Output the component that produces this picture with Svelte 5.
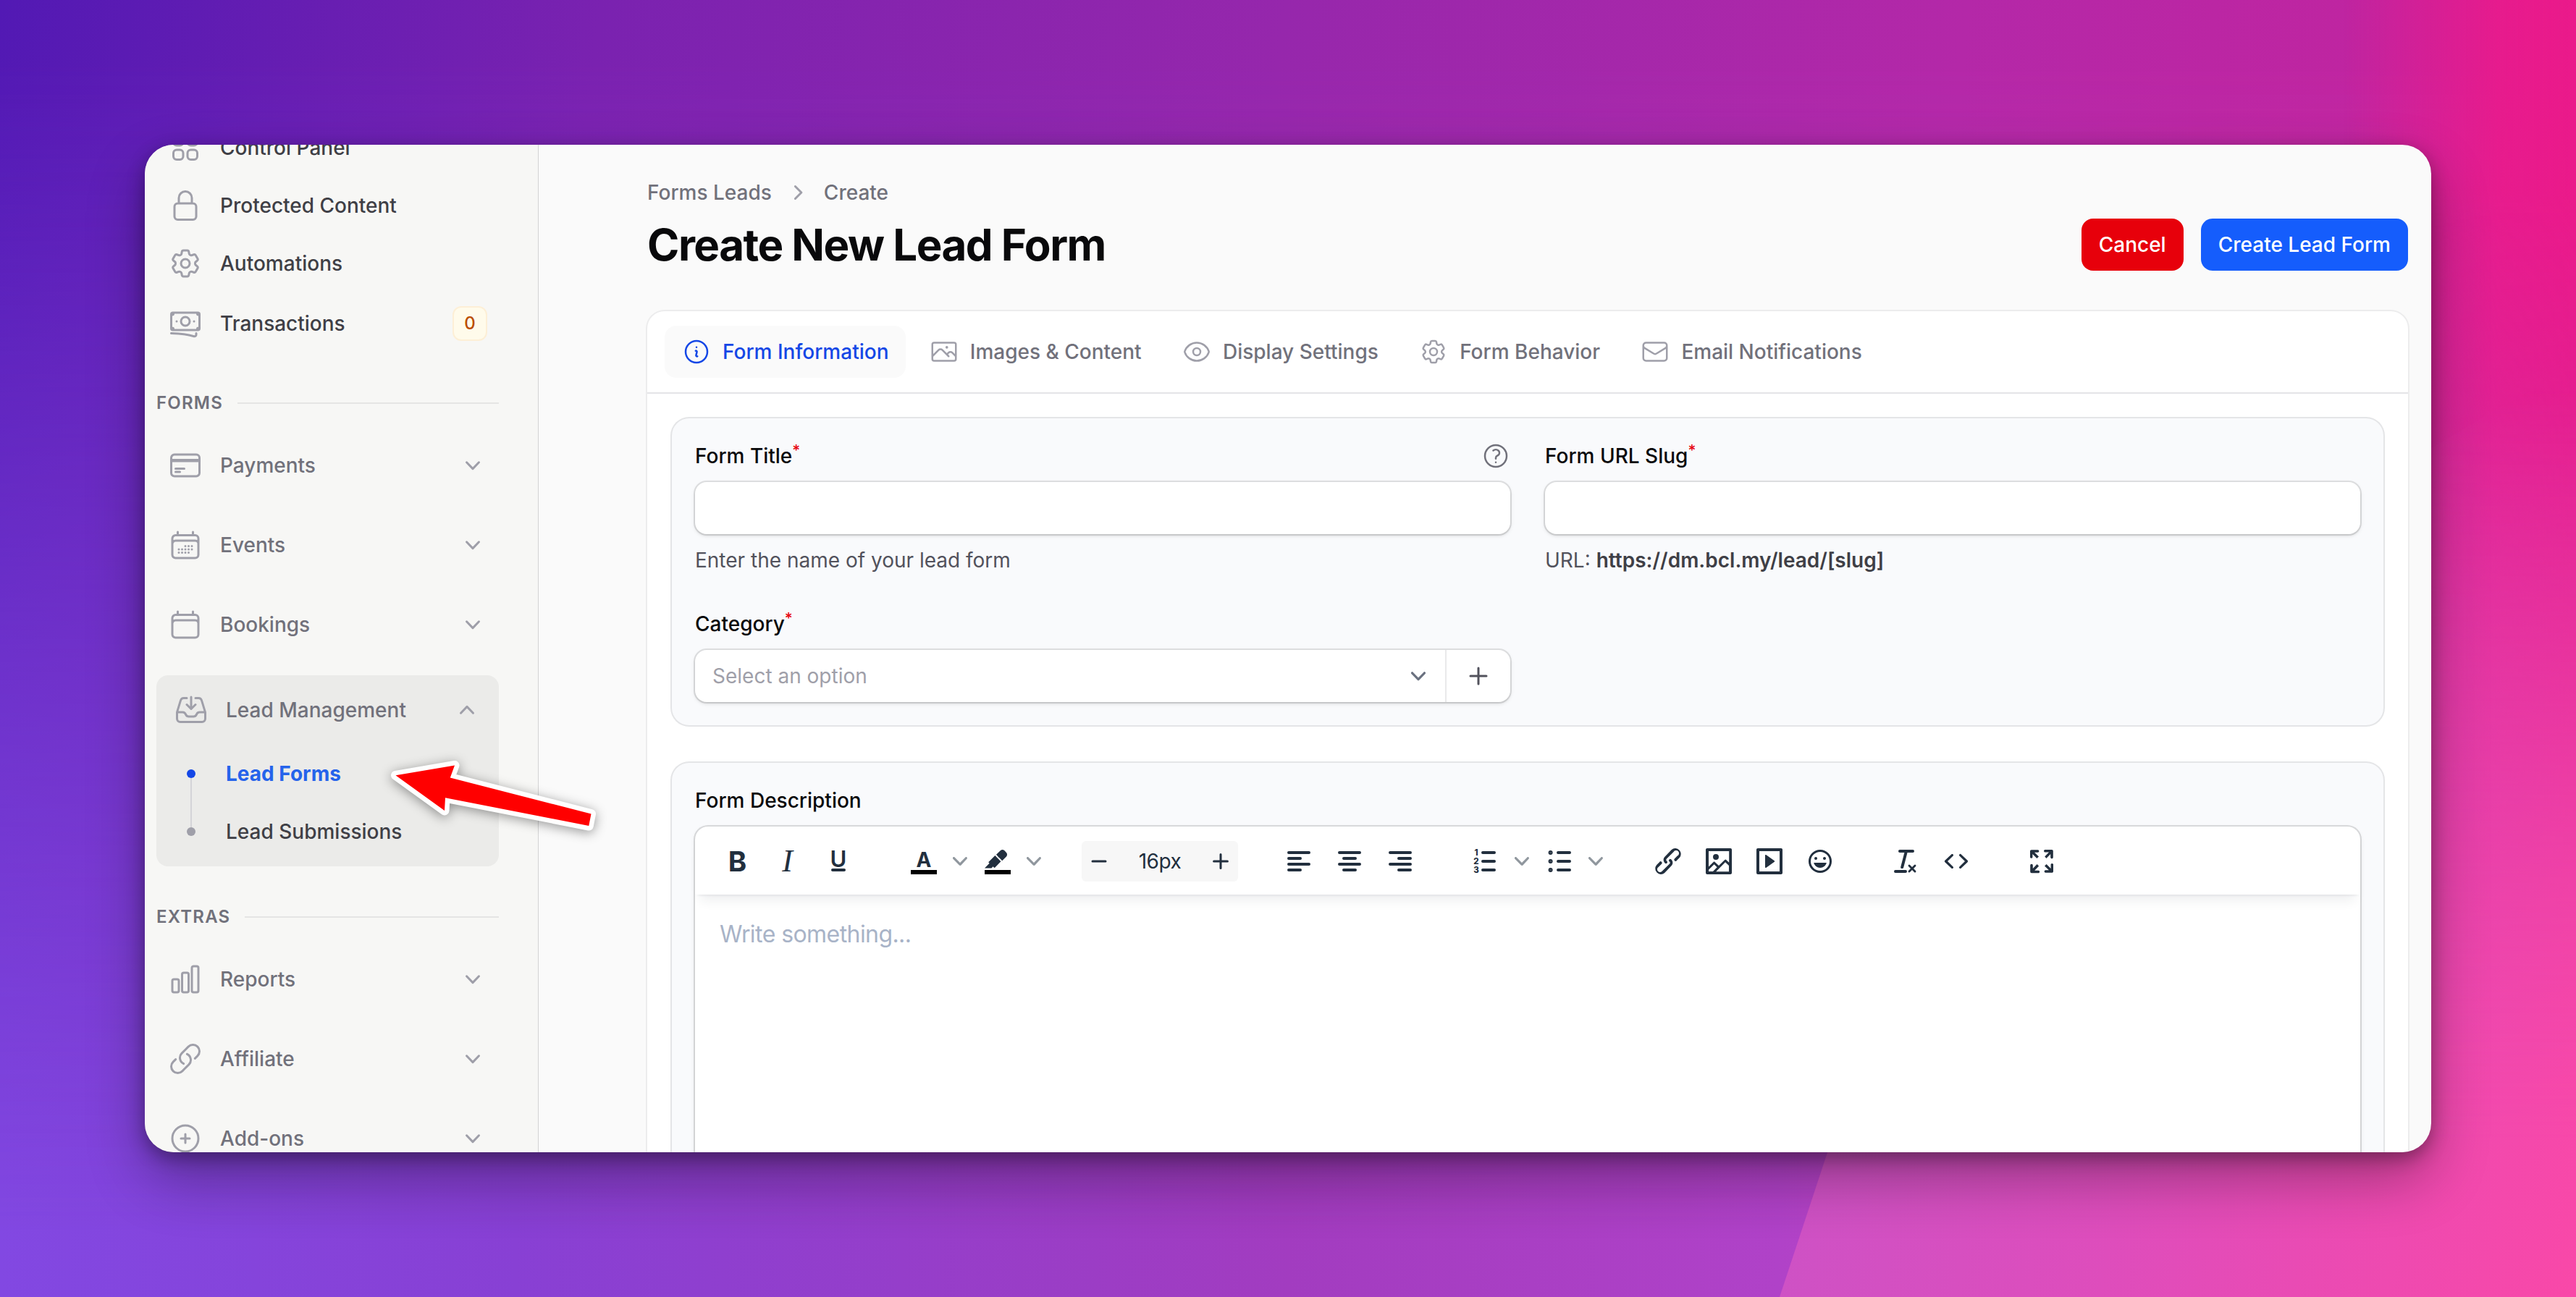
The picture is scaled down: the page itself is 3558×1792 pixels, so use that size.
<script lang="ts">
    const outline: Record<string, string> = {
        squares: 'M3.75 6A2.25 2.25 0 0 1 6 3.75h2.25A2.25 2.25 0 0 1 10.5 6v2.25a2.25 2.25 0 0 1-2.25 2.25H6a2.25 2.25 0 0 1-2.25-2.25V6ZM3.75 15.75A2.25 2.25 0 0 1 6 13.5h2.25a2.25 2.25 0 0 1 2.25 2.25V18a2.25 2.25 0 0 1-2.25 2.25H6A2.25 2.25 0 0 1 3.75 18v-2.25ZM13.5 6a2.25 2.25 0 0 1 2.25-2.25H18A2.25 2.25 0 0 1 20.25 6v2.25A2.25 2.25 0 0 1 18 10.5h-2.25a2.25 2.25 0 0 1-2.25-2.25V6ZM13.5 15.75a2.25 2.25 0 0 1 2.25-2.25H18a2.25 2.25 0 0 1 2.25 2.25V18A2.25 2.25 0 0 1 18 20.25h-2.25A2.25 2.25 0 0 1 13.5 18v-2.25Z',
        lock: 'M16.5 10.5V6.75a4.5 4.5 0 1 0-9 0v3.75m-.75 11.25h10.5a2.25 2.25 0 0 0 2.25-2.25v-6.75a2.25 2.25 0 0 0-2.25-2.25H6.75a2.25 2.25 0 0 0-2.25 2.25v6.75a2.25 2.25 0 0 0 2.25 2.25Z',
        cog: 'M9.594 3.94c.09-.542.56-.94 1.11-.94h2.593c.55 0 1.02.398 1.11.94l.213 1.281c.063.374.313.686.645.87.074.04.147.083.22.127.325.196.72.257 1.075.124l1.217-.456a1.125 1.125 0 0 1 1.37.49l1.296 2.247a1.125 1.125 0 0 1-.26 1.431l-1.003.827c-.293.241-.438.613-.43.992a7.723 7.723 0 0 1 0 .255c-.008.378.137.75.43.991l1.004.827c.424.35.534.955.26 1.43l-1.298 2.247a1.125 1.125 0 0 1-1.369.491l-1.217-.456c-.355-.133-.75-.072-1.076.124a6.47 6.47 0 0 1-.22.128c-.331.183-.581.495-.644.869l-.213 1.281c-.09.543-.56.94-1.11.94h-2.594c-.55 0-1.019-.398-1.11-.94l-.213-1.281c-.062-.374-.312-.686-.644-.87a6.52 6.52 0 0 1-.22-.127c-.325-.196-.72-.257-1.076-.124l-1.217.456a1.125 1.125 0 0 1-1.369-.49l-1.297-2.247a1.125 1.125 0 0 1 .26-1.431l1.004-.827c.292-.24.437-.613.43-.991a6.932 6.932 0 0 1 0-.255c.007-.38-.138-.751-.43-.992l-1.004-.827a1.125 1.125 0 0 1-.26-1.43l1.297-2.247a1.125 1.125 0 0 1 1.37-.491l1.216.456c.356.133.751.072 1.076-.124.072-.044.146-.086.22-.128.332-.183.582-.495.644-.869l.214-1.28ZM15 12a3 3 0 1 1-6 0 3 3 0 0 1 6 0Z',
        banknotes: 'M2.25 18.75a60.07 60.07 0 0 1 15.797 2.101c.727.198 1.453-.342 1.453-1.096V18.75M3.75 4.5v.75A.75.75 0 0 1 3 6h-.75m0 0v-.375c0-.621.504-1.125 1.125-1.125H20.25M2.25 6v9m18-10.5v.75c0 .414.336.75.75.75h.75m-1.5-1.5h.375c.621 0 1.125.504 1.125 1.125v9.75c0 .621-.504 1.125-1.125 1.125h-.375m1.5-1.5H21a.75.75 0 0 0-.75.75v.75m0 0H3.75m0 0h-.375a1.125 1.125 0 0 1-1.125-1.125V15m1.5 1.5v-.75A.75.75 0 0 0 3 15h-.75M15 10.5a3 3 0 1 1-6 0 3 3 0 0 1 6 0Zm3 0h.008v.008H18V10.5Zm-12 0h.008v.008H6V10.5Z',
        card: 'M2.25 8.25h19.5M2.25 9h19.5m-16.5 5.25h6m-6 2.25h3m-3.75 3h15a2.25 2.25 0 0 0 2.25-2.25V6.75A2.25 2.25 0 0 0 19.5 4.5h-15a2.25 2.25 0 0 0-2.25 2.25v10.5A2.25 2.25 0 0 0 4.5 19.5Z',
        calendarDays: 'M6.75 3v2.25M17.25 3v2.25M3 18.75V7.5a2.25 2.25 0 0 1 2.25-2.25h13.5A2.25 2.25 0 0 1 21 7.5v11.25m-18 0A2.25 2.25 0 0 0 5.25 21h13.5A2.25 2.25 0 0 0 21 18.75m-18 0v-7.5A2.25 2.25 0 0 1 5.25 9h13.5A2.25 2.25 0 0 1 21 11.25v7.5m-9-6h.008v.008H12v-.008ZM12 15h.008v.008H12V15Zm0 2.25h.008v.008H12v-.008ZM9.75 15h.008v.008H9.75V15Zm0 2.25h.008v.008H9.75v-.008ZM7.5 15h.008v.008H7.5V15Zm0 2.25h.008v.008H7.5v-.008Zm6.75-4.5h.008v.008h-.008v-.008Zm0 2.25h.008v.008h-.008V15Zm0 2.25h.008v.008h-.008v-.008Zm2.25-4.5h.008v.008H16.5v-.008Zm0 2.25h.008v.008H16.5V15Z',
        calendar: 'M6.75 3v2.25M17.25 3v2.25M3 18.75V7.5a2.25 2.25 0 0 1 2.25-2.25h13.5A2.25 2.25 0 0 1 21 7.5v11.25m-18 0A2.25 2.25 0 0 0 5.25 21h13.5A2.25 2.25 0 0 0 21 18.75m-18 0v-7.5A2.25 2.25 0 0 1 5.25 9h13.5A2.25 2.25 0 0 1 21 11.25v7.5',
        inbox: 'M9 3.75H6.912a2.25 2.25 0 0 0-2.15 1.588L2.35 13.177a2.25 2.25 0 0 0-.1.661V18a2.25 2.25 0 0 0 2.25 2.25h15A2.25 2.25 0 0 0 21.75 18v-4.162c0-.224-.034-.447-.1-.661L19.24 5.338a2.25 2.25 0 0 0-2.15-1.588H15M2.25 13.5h3.86a2.25 2.25 0 0 1 2.012 1.244l.256.512a2.25 2.25 0 0 0 2.013 1.244h3.218a2.25 2.25 0 0 0 2.013-1.244l.256-.512a2.25 2.25 0 0 1 2.013-1.244h3.859M12 3v8.25m0 0-3-3m3 3 3-3',
        chart: 'M3 13.125C3 12.504 3.504 12 4.125 12h2.25c.621 0 1.125.504 1.125 1.125v6.75C7.5 20.496 6.996 21 6.375 21h-2.25A1.125 1.125 0 0 1 3 19.875v-6.75ZM9.75 8.625c0-.621.504-1.125 1.125-1.125h2.25c.621 0 1.125.504 1.125 1.125v11.25c0 .621-.504 1.125-1.125 1.125h-2.25a1.125 1.125 0 0 1-1.125-1.125V8.625ZM16.5 4.125c0-.621.504-1.125 1.125-1.125h2.25C20.496 3 21 3.504 21 4.125v15.75c0 .621-.504 1.125-1.125 1.125h-2.25a1.125 1.125 0 0 1-1.125-1.125V4.125Z',
        link: 'M13.19 8.688a4.5 4.5 0 0 1 1.242 7.244l-4.5 4.5a4.5 4.5 0 0 1-6.364-6.364l1.757-1.757m13.35-.622 1.757-1.757a4.5 4.5 0 0 0-6.364-6.364l-4.5 4.5a4.5 4.5 0 0 0 1.242 7.244',
        plusCircle: 'M12 9v6m3-3H9m12 0a9 9 0 1 1-18 0 9 9 0 0 1 18 0Z',
        info: 'm11.25 11.25.041-.02a.75.75 0 0 1 1.063.852l-.708 2.836a.75.75 0 0 0 1.063.853l.041-.021M21 12a9 9 0 1 1-18 0 9 9 0 0 1 18 0Zm-9-3.75h.008v.008H12V8.25Z',
        photo: 'm2.25 15.75 5.159-5.159a2.25 2.25 0 0 1 3.182 0l5.159 5.159m-1.5-1.5 1.409-1.409a2.25 2.25 0 0 1 3.182 0l2.909 2.909m-18 3.75h16.5a1.5 1.5 0 0 0 1.5-1.5V6a1.5 1.5 0 0 0-1.5-1.5H3.75A1.5 1.5 0 0 0 2.25 6v12a1.5 1.5 0 0 0 1.5 1.5Zm10.5-11.25h.008v.008h-.008V8.25Zm.375 0a.375.375 0 1 1-.75 0 .375.375 0 0 1 .75 0Z',
        eye: 'M2.036 12.322a1.012 1.012 0 0 1 0-.639C3.423 7.51 7.36 4.5 12 4.5c4.638 0 8.573 3.007 9.963 7.178.07.207.07.431 0 .639C20.577 16.49 16.64 19.5 12 19.5c-4.638 0-8.573-3.007-9.963-7.178ZM15 12a3 3 0 1 1-6 0 3 3 0 0 1 6 0Z',
        envelope: 'M21.75 6.75v10.5a2.25 2.25 0 0 1-2.25 2.25h-15a2.25 2.25 0 0 1-2.25-2.25V6.75m19.5 0A2.25 2.25 0 0 0 19.5 4.5h-15a2.25 2.25 0 0 0-2.25 2.25m19.5 0v.243a2.25 2.25 0 0 1-1.07 1.916l-7.5 4.615a2.25 2.25 0 0 1-2.36 0L3.32 8.91a2.25 2.25 0 0 1-1.07-1.916V6.75',
        question: 'M9.879 7.519c1.171-1.025 3.071-1.025 4.242 0 1.172 1.025 1.172 2.687 0 3.712-.203.179-.43.326-.67.442-.745.361-1.45.999-1.45 1.827v.75M21 12a9 9 0 1 1-18 0 9 9 0 0 1 18 0Zm-9 5.25h.008v.008H12v-.008Z'
    };

    const editor: Record<string, string> = {
        highlight: 'M7.7 16.7H3l3.3-3.3-.7-.8L10.2 8l4 4.1-4 4.2c-.2.2-.6.2-.8 0l-.6-.7-1.1 1.1zm5-7.5L11 7.4l3-2.9a2 2 0 0 1 2.6 0L18 6c.7.7.7 2 0 2.7l-2.9 2.9-1.8-1.8-.6-.6',
        link: 'M6.2 12.3a1 1 0 0 1 1.4 1.4l-2 2a2 2 0 1 0 2.6 2.8l4.8-4.8a1 1 0 0 0 0-1.4 1 1 0 1 1 1.4-1.3 2.9 2.9 0 0 1 0 4L9.6 20a3.9 3.9 0 0 1-5.5-5.5l2-2Zm11.6-.6a1 1 0 0 1-1.4-1.4l2-2a2 2 0 1 0-2.6-2.8L11 10.3a1 1 0 0 0 0 1.4A1 1 0 1 1 9.6 13a2.9 2.9 0 0 1 0-4L14.4 4a3.9 3.9 0 0 1 5.5 5.5l-2 2Z',
        image: 'm5 15.7 3.3-3.2c.3-.3.7-.3 1 0L12 15l4.1-4c.3-.4.8-.4 1 0l2 1.9V5H5v10.7ZM5 18V19h3l2.8-2.9-2-2L5 17.9Zm14-3-2.5-2.4-6.4 6.5H19v-4ZM4 3h16c.6 0 1 .4 1 1v16c0 .6-.4 1-1 1H4a1 1 0 0 1-1-1V4c0-.6.4-1 1-1Zm6 8a2 2 0 1 0 0-4 2 2 0 0 0 0 4Z',
        media: 'M4 3h16c.6 0 1 .4 1 1v16c0 .6-.4 1-1 1H4a1 1 0 0 1-1-1V4c0-.6.4-1 1-1Zm1 2v14h14V5H5Zm4.8 2.6 5.6 4a.5.5 0 0 1 0 .8l-5.6 4A.5.5 0 0 1 9 16V8a.5.5 0 0 1 .8-.4Z',
        emoji: 'M9 11c.6 0 1-.4 1-1s-.4-1-1-1a1 1 0 0 0-1 1c0 .6.4 1 1 1Zm6 0c.6 0 1-.4 1-1s-.4-1-1-1a1 1 0 0 0-1 1c0 .6.4 1 1 1Zm-3 5.5c2.1 0 4-1.5 4.4-3.5H7.6c.5 2 2.3 3.5 4.4 3.5ZM12 4a8 8 0 1 0 0 16 8 8 0 0 0 0-16Zm0 14.5a6.5 6.5 0 1 1 0-13 6.5 6.5 0 0 1 0 13Z',
        clear: 'M13.2 6a1 1 0 0 1 0 .2l-2.6 10a1 1 0 0 1-1 .8h-.2a.8.8 0 0 1-.8-1l2.6-10H8a1 1 0 1 1 0-2h9a1 1 0 0 1 0 2h-3.8ZM5 18h7a1 1 0 0 1 0 2H5a1 1 0 0 1 0-2Zm13 1.5L16.5 18 15 19.5a.7.7 0 0 1-1-1l1.5-1.5-1.5-1.5a.7.7 0 0 1 1-1l1.5 1.5 1.5-1.5a.7.7 0 0 1 1 1L17.5 17l1.5 1.5a.7.7 0 0 1-1 1Z',
        code: 'M9.8 15.7c.3.3.3.8 0 1-.3.4-.9.4-1.2 0l-4.4-4.1a.8.8 0 0 1 0-1.2l4.4-4.2c.3-.3.9-.3 1.2 0 .3.3.3.8 0 1.1L6 12l3.8 3.7ZM14.2 15.7c-.3.3-.3.8 0 1 .4.4.9.4 1.2 0l4.4-4.1c.3-.3.3-.9 0-1.2l-4.4-4.2a.8.8 0 0 0-1.2 0c-.3.3-.3.8 0 1.1L18 12l-3.8 3.7Z',
        fullscreen: 'm15.3 10-1.2-1.3 2.9-3h-2.3a.9.9 0 1 1 0-1.7H19c.5 0 .9.4.9.9v4.4a.9.9 0 1 1-1.8 0V7l-2.9 3Zm0 4 3 3v-2.3a.9.9 0 1 1 1.7 0V19c0 .5-.4.9-.9.9h-4.4a.9.9 0 1 1 0-1.8H17l-3-2.9 1.3-1.2ZM10 15.4l-2.9 3h2.3a.9.9 0 1 1 0 1.7H5a.9.9 0 0 1-.9-.9v-4.4a.9.9 0 1 1 1.8 0V17l2.9-3 1.2 1.3ZM8.7 10 5.7 7v2.3a.9.9 0 0 1-1.7 0V5c0-.5.4-.9.9-.9h4.4a.9.9 0 0 1 0 1.8H7l3 2.9-1.3 1.2Z'
    };

    const topItems = [
        { label: 'Control Panel', icon: 'squares' },
        { label: 'Protected Content', icon: 'lock' },
        { label: 'Automations', icon: 'cog' },
        { label: 'Transactions', icon: 'banknotes', badge: '0' }
    ];

    const formGroups = [
        { label: 'Payments', icon: 'card' },
        { label: 'Events', icon: 'calendarDays' },
        { label: 'Bookings', icon: 'calendar' }
    ];

    const extraGroups = [
        { label: 'Reports', icon: 'chart' },
        { label: 'Affiliate', icon: 'link' },
        { label: 'Add-ons', icon: 'plusCircle' }
    ];

    const tabs = [
        { label: 'Form Information', icon: 'info' },
        { label: 'Images & Content', icon: 'photo' },
        { label: 'Display Settings', icon: 'eye' },
        { label: 'Form Behavior', icon: 'cog' },
        { label: 'Email Notifications', icon: 'envelope' }
    ];

    let activeTab = $state('Form Information');
    let title = $state('');
    let slug = $state('');
</script>

{#snippet icon(name: string)}
    <svg class="icon" viewBox="0 0 24 24" fill="none" stroke="currentColor" stroke-width="1.5" stroke-linecap="round" stroke-linejoin="round">
        <path d={outline[name]} />
    </svg>
{/snippet}

{#snippet chevron(up = false)}
    <svg class="chevron" class:up viewBox="0 0 20 20" fill="none" stroke="currentColor" stroke-width="1.5" stroke-linecap="round" stroke-linejoin="round">
        <path d="M5.75 7.9 10 12.3l4.25-4.4" />
    </svg>
{/snippet}

{#snippet tool(name: string)}
    <button class="tool">
        <svg viewBox="0 0 24 24" fill="currentColor" fill-rule="evenodd"><path d={editor[name]} /></svg>
    </button>
{/snippet}

{#snippet lines(d: string)}
    <button class="tool">
        <svg viewBox="0 0 24 24" fill="none" stroke="currentColor" stroke-width="2" stroke-linecap="round"><path {d} /></svg>
    </button>
{/snippet}

{#snippet caret()}
    <button class="caret">
        <svg viewBox="0 0 10 10" fill="currentColor">
            <path d="M8.7 2.2c.3-.3.8-.3 1 0 .4.4.4.9 0 1.2L5.7 7.8c-.3.3-.9.3-1.2 0L.2 3.4a.8.8 0 0 1 0-1.2c.3-.3.8-.3 1.1 0L5 6l3.7-3.8Z" />
        </svg>
    </button>
{/snippet}

<div class="backdrop">
    <div class="glow"></div>
    <div class="wedge"></div>

    <div class="window">
        <aside class="sidebar">
            <nav class="links">
                {#each topItems as item}
                    <a class="item" class:tall={item.badge} href="#top">
                        {@render icon(item.icon)}
                        <span>{item.label}</span>
                        {#if item.badge}
                            <span class="count">{item.badge}</span>
                        {/if}
                    </a>
                {/each}
            </nav>

            <div class="heading">FORMS</div>
            <div class="groups">
                {#each formGroups as group}
                    <button class="item group">
                        {@render icon(group.icon)}
                        <span>{group.label}</span>
                        {@render chevron()}
                    </button>
                {/each}
            </div>

            <div class="open-group">
                <button class="item group">
                    {@render icon('inbox')}
                    <span>Lead Management</span>
                    {@render chevron(true)}
                </button>
                <div class="children">
                    <div class="rail">
                        <i class="dot active"></i>
                        <i class="wire"></i>
                        <i class="dot"></i>
                    </div>
                    <div class="child-links">
                        <a class="active" href="#forms">Lead Forms</a>
                        <a href="#submissions">Lead Submissions</a>
                    </div>
                </div>
            </div>

            <div class="heading extras">EXTRAS</div>
            <div class="groups">
                {#each extraGroups as group}
                    <button class="item group">
                        {@render icon(group.icon)}
                        <span>{group.label}</span>
                        {@render chevron()}
                    </button>
                {/each}
            </div>
        </aside>

        <main class="page">
            <div class="breadcrumbs">
                <span>Forms Leads</span>
                <svg viewBox="0 0 20 20" fill="none" stroke="currentColor" stroke-width="1.5" stroke-linecap="round" stroke-linejoin="round">
                    <path d="m8.2 5.75 4.25 4.25-4.25 4.25" />
                </svg>
                <span>Create</span>
            </div>
            <header class="title-row">
                <h1>Create New Lead Form</h1>
                <div class="actions">
                    <button class="btn danger">Cancel</button>
                    <button class="btn primary">Create Lead Form</button>
                </div>
            </header>

            <div class="card">
                <nav class="tabs">
                    {#each tabs as tab}
                        <button class="tab" class:active={activeTab === tab.label} onclick={() => (activeTab = tab.label)}>
                            {@render icon(tab.icon)}
                            <span>{tab.label}</span>
                        </button>
                    {/each}
                </nav>

                <div class="panel">
                    <section class="section fields">
                        <div class="field">
                            <div class="label">
                                <label for="title">Form Title<sup>*</sup></label>
                                {@render icon('question')}
                            </div>
                            <input id="title" class="control" type="text" bind:value={title} />
                            <p class="hint">Enter the name of your lead form</p>
                        </div>
                        <div class="field">
                            <div class="label">
                                <label for="slug">Form URL Slug<sup>*</sup></label>
                            </div>
                            <input id="slug" class="control" type="text" bind:value={slug} />
                            <p class="hint">URL: <strong>https://dm.bcl.my/lead/[slug]</strong></p>
                        </div>
                        <div class="field">
                            <div class="label"><span>Category<sup>*</sup></span></div>
                            <div class="control select">
                                <span class="placeholder">Select an option</span>
                                {@render chevron()}
                                <button class="add" aria-label="Add category">
                                    <svg viewBox="0 0 20 20" fill="none" stroke="currentColor" stroke-width="1.5" stroke-linecap="round">
                                        <path d="M10 4.5v11M4.5 10h11" />
                                    </svg>
                                </button>
                            </div>
                        </div>
                    </section>

                    <section class="section">
                        <div class="label"><span>Form Description</span></div>
                        <div class="editor">
                            <div class="toolbar">
                                <div class="tools">
                                    <button class="tool">
                                        <svg viewBox="0 0 48 48"><text class="glyph bold" x="24.5" y="38" text-anchor="middle">B</text></svg>
                                    </button>
                                    <button class="tool">
                                        <svg viewBox="0 0 48 48"><text class="glyph italic" x="23.5" y="38" text-anchor="middle">I</text></svg>
                                    </button>
                                    <button class="tool">
                                        <svg viewBox="0 0 48 48">
                                            <text class="glyph under" x="24" y="31.5" text-anchor="middle">U</text>
                                            <rect x="14" y="34" width="20" height="4" rx="2" fill="currentColor" />
                                        </svg>
                                    </button>
                                </div>
                                <div class="tools">
                                    <div class="split">
                                        <button class="tool">
                                            <svg viewBox="0 0 48 48">
                                                <text class="glyph letter" x="24" y="32" text-anchor="middle">A</text>
                                                <rect class="swatch" x="6" y="36" width="36" height="6" />
                                            </svg>
                                        </button>
                                        {@render caret()}
                                    </div>
                                    <div class="split">
                                        <button class="tool">
                                            <svg viewBox="0 0 24 24" fill="currentColor">
                                                <path d={editor.highlight} />
                                                <rect class="swatch" x="3" y="18" width="18" height="3" />
                                            </svg>
                                        </button>
                                        {@render caret()}
                                    </div>
                                </div>
                                <div class="font-size">
                                    <svg viewBox="0 0 24 24" fill="none" stroke="currentColor" stroke-width="1.5" stroke-linecap="round"><path d="M7.5 12h9" /></svg>
                                    <span>16px</span>
                                    <svg viewBox="0 0 24 24" fill="none" stroke="currentColor" stroke-width="1.5" stroke-linecap="round"><path d="M7.3 12h9.4M12 7.3v9.4" /></svg>
                                </div>
                                <div class="tools">
                                    {@render lines('M5 6h14M5 10h8M5 14h14M5 18h8')}
                                    {@render lines('M5 6h14M8 10h8M5 14h14M8 18h8')}
                                    {@render lines('M5 6h14M11 10h8M5 14h14M11 18h8')}
                                </div>
                                <div class="tools">
                                    <div class="split">
                                        <button class="tool">
                                            <svg viewBox="0 0 48 48" fill="none" stroke="currentColor" stroke-width="4" stroke-linecap="round">
                                                <path d="M20 12h16M20 24h16M20 36h16" />
                                                <text class="glyph digit" x="11" y="16" text-anchor="middle">1</text>
                                                <text class="glyph digit" x="11" y="28" text-anchor="middle">2</text>
                                                <text class="glyph digit" x="11" y="40" text-anchor="middle">3</text>
                                            </svg>
                                        </button>
                                        {@render caret()}
                                    </div>
                                    <div class="split">
                                        <button class="tool">
                                            <svg viewBox="0 0 24 24" fill="currentColor" stroke="currentColor" stroke-width="2" stroke-linecap="round">
                                                <path d="M11 6h8M11 12h8M11 18h8" />
                                                <circle cx="5.8" cy="6" r=".5" />
                                                <circle cx="5.8" cy="12" r=".5" />
                                                <circle cx="5.8" cy="18" r=".5" />
                                            </svg>
                                        </button>
                                        {@render caret()}
                                    </div>
                                </div>
                                <div class="tools">
                                    {@render tool('link')}
                                    {@render tool('image')}
                                    {@render tool('media')}
                                    {@render tool('emoji')}
                                </div>
                                <div class="tools">
                                    {@render tool('clear')}
                                    {@render tool('code')}
                                </div>
                                <div class="tools">
                                    {@render tool('fullscreen')}
                                </div>
                            </div>
                            <div class="writing">Write something...</div>
                        </div>
                    </section>
                </div>
            </div>
        </main>
    </div>

    <!-- callout pointing at Lead Forms -->
    <svg class="arrow" viewBox="530 1040 310 130">
        <path d="M546.5 1071.3 628 1057.5 621.8 1074.5 816.5 1124.5 813.3 1141 615 1102.2 614 1120Z" />
    </svg>
</div>

<style>
    :global(body) {
        margin: 0;
        background: #9a2bb0;
    }

    button,
    input {
        font: inherit;
        color: inherit;
        border: 0;
        padding: 0;
        margin: 0;
        background: none;
    }

    a {
        color: inherit;
        text-decoration: none;
    }

    svg {
        display: block;
        flex: none;
    }

    .backdrop {
        position: relative;
        box-sizing: border-box;
        width: 3558px;
        height: 1792px;
        padding: 200px;
        overflow: hidden;
        background: linear-gradient(90deg, #8248e2 0%, #8840d4 20%, #a23cc0 50%, #b042c8 69%, #d048b8 85%, #f046a8 100%);
        font-family: Inter, 'Liberation Sans', sans-serif;
        font-size: 28px;
        line-height: 40px;
        font-weight: 500;
        color: #09090b;
    }

    .backdrop::before {
        content: '';
        position: absolute;
        inset: 0;
        background: linear-gradient(97deg, #5219b4 0%, #7a22b0 22%, #9627ac 47%, #b428a8 72%, #c2249f 90%, #d0209a 100%);
        mask-image: linear-gradient(180deg, #000 5%, transparent 95%);
    }

    /* pink light coming in from the right edge */
    .glow {
        position: absolute;
        inset: 0;
        background: linear-gradient(90deg, transparent 91%, rgba(236, 26, 138, 0.85) 97%, #ea1a8a 100%);
        mask-image: linear-gradient(180deg, #000 15%, transparent 80%);
    }

    .wedge {
        position: absolute;
        inset: 0;
        background: linear-gradient(100deg, #cc52c6 70%, #de4dbc 83%, #f948a8 100%);
        clip-path: polygon(2720px 1000px, 100% 500px, 100% 100%, 2458px 100%);
        mask-image: linear-gradient(180deg, transparent 30%, #000 88%);
    }

    .window {
        position: relative;
        display: flex;
        width: 3158px;
        height: 1392px;
        border-radius: 40px;
        overflow: hidden;
        background: #fafafa;
    }

    .backdrop::after {
        content: '';
        position: absolute;
        inset: 200px;
        border-radius: 40px;
        box-shadow: 0 8px 24px rgba(0, 0, 0, 0.32), 0 36px 80px rgba(0, 0, 0, 0.32);
    }

    /* sidebar */
    .sidebar {
        box-sizing: border-box;
        width: 544px;
        flex: none;
        padding: 0 54px 0 16px;
        border-right: 1px solid #d4d4d4;
        background: #f7f7f5;
    }

    .links {
        margin-top: -36px;
    }

    .item {
        display: flex;
        align-items: center;
        box-sizing: border-box;
        width: 100%;
        height: 80px;
        padding: 0 16px;
        gap: 24px;
        color: #3f3f46;
    }

    .item.tall {
        height: 85px;
    }

    .item.group {
        color: #71717b;
    }

    .item .icon {
        width: 48px;
        height: 48px;
        color: #9f9fa9;
    }

    .count {
        box-sizing: border-box;
        width: 48px;
        height: 48px;
        margin-left: auto;
        border: 2px solid #fdefd6;
        border-radius: 12px;
        background: #fffbeb;
        color: #bb4d00;
        font-size: 24px;
        line-height: 44px;
        text-align: center;
    }

    .chevron {
        width: 40px;
        height: 40px;
        margin-left: auto;
        color: #9f9fa9;
    }

    .chevron.up {
        transform: rotate(180deg);
    }

    .heading {
        display: flex;
        align-items: center;
        gap: 20px;
        height: 48px;
        margin: 44px 0 22px;
        font-size: 24px;
        font-weight: 600;
        letter-spacing: 0.05em;
        color: #71717b;
    }

    .heading::after {
        content: '';
        flex: 1;
        height: 2px;
        background: #e5e5e4;
    }

    .heading.extras {
        margin: 46px 0 22px;
    }

    .groups {
        display: flex;
        flex-direction: column;
        gap: 30px;
    }

    .open-group {
        margin-top: 30px;
        padding: 8px;
        border-radius: 16px;
        background: #ebebe9;
    }

    .children {
        display: flex;
        margin-top: 8px;
        padding-left: 16px;
        gap: 24px;
    }

    .rail {
        display: flex;
        flex-direction: column;
        align-items: center;
        width: 48px;
        padding: 34px 0;
    }

    .dot {
        width: 12px;
        height: 12px;
        border-radius: 50%;
        background: #9f9fa9;
    }

    .dot.active {
        background: #1447e6;
    }

    .wire {
        flex: 1;
        width: 2px;
        background: #d4d4d8;
    }

    .child-links a {
        display: block;
        line-height: 80px;
        color: #3f3f46;
    }

    .child-links a.active {
        color: #2563eb;
        font-weight: 700;
    }

    /* page */
    .page {
        flex: 1;
        padding: 46px 32px 0 150px;
    }

    .breadcrumbs {
        display: flex;
        align-items: center;
        gap: 16px;
        height: 40px;
        color: #71717b;
    }

    .breadcrumbs svg {
        width: 40px;
        height: 40px;
        color: #9f9fa9;
    }

    .title-row {
        display: flex;
        align-items: center;
        justify-content: space-between;
        height: 72px;
        margin-top: 16px;
    }

    h1 {
        margin: 0;
        font-size: 60px;
        line-height: 72px;
        font-weight: 700;
        letter-spacing: -0.025em;
    }

    .actions {
        display: flex;
        gap: 24px;
    }

    .btn {
        height: 72px;
        padding: 0 24px;
        border-radius: 16px;
        color: #fff;
    }

    .danger {
        background: #e7000b;
    }

    .primary {
        background: #155dfc;
    }

    .card {
        margin-top: 56px;
        border-radius: 24px 24px 0 0;
        background: #fff;
        box-shadow: 0 0 0 2px rgba(9, 9, 11, 0.055);
    }

    .tabs {
        display: flex;
        gap: 8.3px;
        padding: 20px 24px;
        border-bottom: 2px solid #e4e4e7;
    }

    .tab {
        display: flex;
        align-items: center;
        gap: 16px;
        height: 72px;
        padding: 0 24px;
        border-radius: 16px;
        color: #71717b;
    }

    .tab .icon {
        width: 40px;
        height: 40px;
        color: #9f9fa9;
    }

    .tab.active,
    .tab.active .icon {
        color: #1447e6;
    }

    .tab.active {
        background: #fafafa;
    }

    .panel {
        display: flex;
        flex-direction: column;
        gap: 52px;
        padding: 34px;
    }

    .section {
        padding: 32px;
        border-radius: 24px;
        background: #f9fafc;
        box-shadow: 0 0 0 2px #e4e5e7;
    }

    .fields {
        display: grid;
        grid-template-columns: 1fr 1fr;
        gap: 48px;
    }

    .label {
        display: flex;
        align-items: center;
        justify-content: space-between;
        height: 40px;
        margin-bottom: 16px;
    }

    .label .icon {
        width: 40px;
        height: 40px;
        color: #71717b;
    }

    sup {
        position: relative;
        top: -0.5em;
        font-size: 21px;
        line-height: 0;
        vertical-align: baseline;
        color: #e7000b;
    }

    .control {
        display: block;
        box-sizing: border-box;
        width: 100%;
        height: 72px;
        padding: 0 24px;
        border-radius: 16px;
        background: #fff;
        box-shadow: 0 0 0 2px rgba(9, 9, 11, 0.1), 0 2px 6px rgba(0, 0, 0, 0.1), 0 2px 4px -1px rgba(0, 0, 0, 0.1);
    }

    .hint {
        margin: 16px 0 0;
        font-weight: 400;
        color: #52525c;
    }

    .hint strong {
        font-weight: 600;
        color: #3f3f46;
    }

    .select {
        display: flex;
        align-items: center;
        padding: 0;
    }

    .placeholder {
        padding-left: 24px;
        font-weight: 400;
        color: #9f9fa9;
    }

    .select .chevron {
        margin-right: 17px;
        color: #6b7280;
        stroke-width: 1.6;
    }

    .add {
        height: 72px;
        padding: 0 24px;
        border-left: 2px solid #e9e9eb;
        color: #52525c;
    }

    .add svg {
        width: 40px;
        height: 40px;
    }

    /* rich text editor */
    .editor {
        height: 700px;
        border-radius: 18px;
        background: #fff;
        box-shadow: 0 0 0 2px rgba(9, 9, 11, 0.12), 0 2px 6px rgba(0, 0, 0, 0.1);
    }

    .toolbar {
        display: flex;
        align-items: center;
        box-sizing: border-box;
        gap: 50px;
        height: 94px;
        padding: 2px 0 0 24px;
        border-radius: 18px 18px 0 0;
        color: #222f3e;
        box-shadow: 0 4px 4px -4px rgba(34, 47, 62, 0.14), 0 16px 16px -8px rgba(34, 47, 62, 0.08);
    }

    .tools {
        display: flex;
        gap: 2px;
    }

    .split {
        display: flex;
    }

    .tool {
        display: flex;
        align-items: center;
        justify-content: center;
        width: 68px;
        height: 56px;
    }

    .tool svg,
    .font-size svg {
        width: 48px;
        height: 48px;
    }

    .caret {
        display: flex;
        align-items: center;
        justify-content: center;
        width: 32px;
        height: 56px;
        color: rgba(34, 47, 62, 0.5);
    }

    .caret svg {
        width: 20px;
        height: 20px;
    }

    .glyph {
        fill: currentColor;
        stroke: none;
    }

    .bold {
        font-size: 38.5px;
        font-weight: 700;
    }

    .italic {
        font-family: 'Liberation Serif', serif;
        font-size: 44px;
        font-style: italic;
        font-weight: 400;
    }

    .under {
        font-size: 31px;
        font-weight: 600;
    }

    .letter {
        font-size: 28px;
        font-weight: 700;
    }

    .digit {
        font-size: 11.5px;
        font-weight: 800;
    }

    .swatch {
        fill: #000;
    }

    .font-size {
        display: flex;
        align-items: center;
        justify-content: space-between;
        width: 216px;
        height: 56px;
        border-radius: 6px;
        background: #f7f7f7;
        font-weight: 400;
        letter-spacing: -0.5px;
    }

    .writing {
        padding: 34px 34px;
        font-size: 32px;
        line-height: 42px;
        font-weight: 400;
        letter-spacing: -0.57px;
        color: #a8b3c7;
    }

    .arrow {
        position: absolute;
        left: 530px;
        top: 1040px;
        z-index: 2;
        width: 310px;
        height: 130px;
        overflow: visible;
        fill: #f00;
        stroke: #fff;
        stroke-width: 13px;
        stroke-linejoin: round;
        paint-order: stroke;
        filter: drop-shadow(0 3px 8px rgba(0, 0, 0, 0.4));
    }
</style>
